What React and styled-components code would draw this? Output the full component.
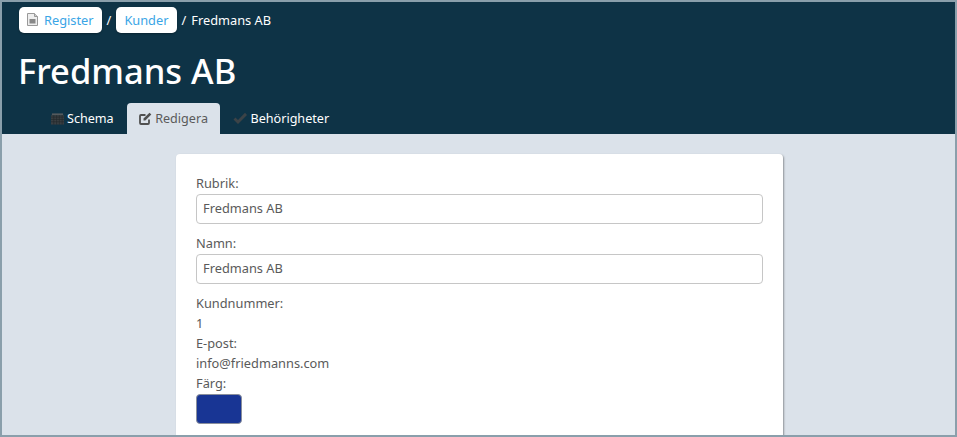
import React from 'react'
import styled, { createGlobalStyle } from 'styled-components'

const Global = createGlobalStyle`
  html, body { margin: 0; padding: 0; height: 100%; overflow: hidden; }
  body { font-family: "Noto Sans", "Open Sans", sans-serif; font-size: 12.8px; color: #5a5a5a; }
  * { box-sizing: border-box; }
`

const Frame = styled.div`
  width: 957px;
  height: 437px;
  border: 2px solid #8a9fab;
  background: #dbe2ea;
  overflow: hidden;
`

const Header = styled.header`
  height: 132px;
  background: #0e3346;
  padding: 5px 17px 0;
  display: flex;
  flex-direction: column;
`

const Crumbs = styled.nav`
  display: flex;
  align-items: center;
  height: 26px;
  color: #fff;
`

const Crumb = styled.a`
  display: flex;
  align-items: center;
  gap: 6px;
  height: 26px;
  padding: 0 8px 1px;
  background: #fff;
  border-radius: 5px;
  color: #3aa5e6;
  box-shadow: 0 1px 2px rgba(0, 0, 0, 0.3);
`

const Sep = styled.span`
  margin: 0 5px;
`

const Title = styled.h1`
  margin: 15px 0 0 -1px;
  height: 46px;
  line-height: 46px;
  font-size: 34.5px;
  font-weight: 500;
  color: #fff;
`

const Tabs = styled.div`
  display: flex;
  gap: 1.5px;
  margin-top: 9px;
  padding-left: 20px;
`

const Tab = styled.a`
  display: flex;
  align-items: center;
  gap: 3px;
  height: 31px;
  padding: 0 12px 1px;
  font-size: 12.6px;
  border-radius: 4px 4px 0 0;
  background: ${({ $active }) => ($active ? '#dbe2ea' : 'transparent')};
  color: ${({ $active }) => ($active ? '#5a5a5a' : '#fff')};
`

const Main = styled.main`
  display: flex;
  justify-content: center;
  padding: 20px 0 0 3px;
  margin-left: -1px;
`

const Card = styled.section`
  width: 607px;
  height: 300px;
  padding: 19px 20px;
  background: #fff;
  border-radius: 4px;
  box-shadow: 1px 1px 2px rgba(0, 0, 0, 0.35);
`

const Row = styled.div`
  height: 20px;
  line-height: 20px;
`

const Input = styled.input`
  display: block;
  width: 567px;
  height: 30px;
  margin: 1px 0 9px;
  padding: 0 6px 2px;
  font: inherit;
  color: #5a5a5a;
  background: #fff;
  border: 1px solid #c6c6c6;
  border-radius: 4px;
`

const Swatch = styled.div`
  width: 46px;
  height: 30px;
  margin-top: 1px;
  background: #183594;
  border: 1px solid #8a8f9c;
  border-radius: 4px;
`

const FileIcon = () => (
  <svg width="11" height="13" viewBox="0 0 11 13">
    <path d="M.5.5h7l3 3v9H.5z" fill="#eee" stroke="#999" />
    <path d="M7.5.5v3h3" fill="#ccc" stroke="#999" />
    <rect x="2.5" y="6" width="6" height="4.5" fill="#888" />
  </svg>
)

const CalendarIcon = () => (
  <svg width="13" height="13" viewBox="0 0 14 13">
    <path d="M1 1h12v2H1z" fill="#555a5d" />
    <rect x="0" y="3" width="14" height="10" fill="#3a3f42" />
    <path d="M0 5h14M0 7.500h14M0 10h14M3 3v10M6 3v10M9 3v10M12 3v10" stroke="#22282c" strokeWidth=".7" />
  </svg>
)

const EditIcon = () => (
  <svg width="13" height="13" viewBox="0 0 13 13" fill="none">
    <path d="M10 7.500V11a1 1 0 0 1-1 1H2a1 1 0 0 1-1-1V4a1 1 0 0 1 1-1h4.500" stroke="#505050" strokeWidth="1.8" />
    <path d="M4.500 6.500 10.500 .8l1.800 1.800-6 5.900H4.500z" fill="#505050" />
  </svg>
)

const CheckIcon = () => (
  <svg width="14" height="13" viewBox="0 0 14 13">
    <path d="M.5 7.500 5 12 14 3 12 .8 5 8 2.500 5.500z" fill="#3c4347" />
  </svg>
)

export default function App() {
  return (
    <Frame>
      <Global />
      <Header>
        <Crumbs>
          <Crumb><FileIcon />Register</Crumb>
          <Sep>/</Sep>
          <Crumb>Kunder</Crumb>
          <Sep>/</Sep>
          <span>Fredmans AB</span>
        </Crumbs>
        <Title>Fredmans AB</Title>
        <Tabs>
          <Tab><CalendarIcon />Schema</Tab>
          <Tab $active><EditIcon />Redigera</Tab>
          <Tab><CheckIcon />Behörigheter</Tab>
        </Tabs>
      </Header>
      <Main>
        <Card>
          <Row>Rubrik:</Row>
          <Input defaultValue="Fredmans AB" />
          <Row>Namn:</Row>
          <Input defaultValue="Fredmans AB" />
          <Row>Kundnummer:</Row>
          <Row>1</Row>
          <Row>E-post:</Row>
          <Row>info@friedmanns.com</Row>
          <Row>Färg:</Row>
          <Swatch />
        </Card>
      </Main>
    </Frame>
  )
}
